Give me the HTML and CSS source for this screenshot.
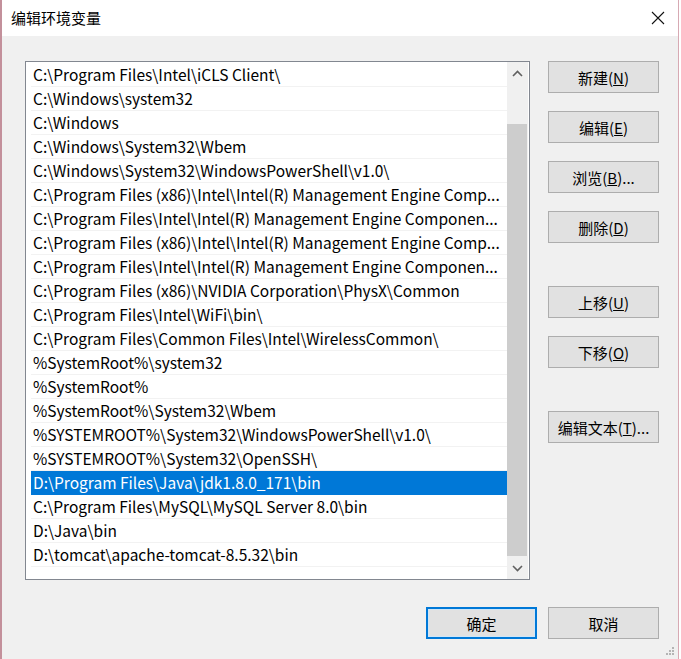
FILE: index.html
```html
<!DOCTYPE html>
<html lang="zh">
<head>
	<meta charset="UTF-8">
	<meta name="viewport" content="width=device-width, initial-scale=1.0">
	<title>编辑环境变量</title>
	<link rel="stylesheet" href="styles.css">
</head>
<body>
    <div id="dialog">
        <div class="titlebar">
            <span class="title">编辑环境变量</span>
            <svg class="close" width="14" height="14" viewBox="0 0 14 14"><path d="M1 1L13 13M13 1L1 13" stroke="#111" stroke-width="1.1" fill="none"/></svg>
        </div>

        <div class="content">
            <div class="main">
                <div class="listbox">
                    <ul class="rows">
                        <li>C:\Program Files\Intel\iCLS Client\</li>
                        <li>C:\Windows\system32</li>
                        <li>C:\Windows</li>
                        <li>C:\Windows\System32\Wbem</li>
                        <li>C:\Windows\System32\WindowsPowerShell\v1.0\</li>
                        <li>C:\Program Files (x86)\Intel\Intel(R) Management Engine Comp...</li>
                        <li>C:\Program Files\Intel\Intel(R) Management Engine Componen...</li>
                        <li>C:\Program Files (x86)\Intel\Intel(R) Management Engine Comp...</li>
                        <li>C:\Program Files\Intel\Intel(R) Management Engine Componen...</li>
                        <li>C:\Program Files (x86)\NVIDIA Corporation\PhysX\Common</li>
                        <li>C:\Program Files\Intel\WiFi\bin\</li>
                        <li>C:\Program Files\Common Files\Intel\WirelessCommon\</li>
                        <li>%SystemRoot%\system32</li>
                        <li>%SystemRoot%</li>
                        <li>%SystemRoot%\System32\Wbem</li>
                        <li>%SYSTEMROOT%\System32\WindowsPowerShell\v1.0\</li>
                        <li>%SYSTEMROOT%\System32\OpenSSH\</li>
                        <li class="active">D:\Program Files\Java\jdk1.8.0_171\bin</li>
                        <li>C:\Program Files\MySQL\MySQL Server 8.0\bin</li>
                        <li>D:\Java\bin</li>
                        <li>D:\tomcat\apache-tomcat-8.5.32\bin</li>
                    </ul>
                    <div class="scrollbar">
                        <div class="arrow up"><svg width="11" height="7" viewBox="0 0 11 7"><path d="M1 6L5.5 1.5L10 6" stroke="#606060" stroke-width="1.6" fill="none"/></svg></div>
                        <div class="track"><div class="thumb"></div></div>
                        <div class="arrow down"><svg width="11" height="7" viewBox="0 0 11 7"><path d="M1 1L5.5 5.5L10 1" stroke="#606060" stroke-width="1.6" fill="none"/></svg></div>
                    </div>
                </div>

                <div class="side">
                    <button>新建(<u>N</u>)</button>
                    <button>编辑(<u>E</u>)</button>
                    <button>浏览(<u>B</u>)...</button>
                    <button>删除(<u>D</u>)</button>
                    <button class="group">上移(<u>U</u>)</button>
                    <button>下移(<u>O</u>)</button>
                    <button class="group">编辑文本(<u>T</u>)...</button>
                </div>
            </div>

            <div class="footer">
                <button class="default">确定</button>
                <button>取消</button>
            </div>
        </div>

        <svg class="grip" width="12" height="12" viewBox="0 0 12 12" fill="#b4b4b4">
            <rect x="9" y="1" width="2" height="2"/>
            <rect x="6" y="4" width="2" height="2"/><rect x="9" y="4" width="2" height="2"/>
            <rect x="3" y="7" width="2" height="2"/><rect x="6" y="7" width="2" height="2"/><rect x="9" y="7" width="2" height="2"/>
        </svg>
    </div>
</body>
</html>
```

FILE: styles.css
```css
*{
	padding: 0;
	margin: 0;
	box-sizing: border-box;
}
body {
	background: #fff;
	font-family: "Noto Sans CJK SC", "Noto Sans", sans-serif;
	font-size: 15px;
	color: #000;
}

#dialog {
    position: relative;
    width: 679px;
    height: 659px;
    display: flex;
    flex-direction: column;
    border-left: 2px solid #c3909b;
    border-right: 1px solid #d7a9b3;
}

.titlebar {
    height: 36px;
    background: #fff;
    display: flex;
    align-items: center;
    justify-content: space-between;
    padding: 0 13px 0 9px;
}
.title {
    line-height: 36px;
}

.content {
    flex: 1;
    background: #f0f0f0;
    padding: 25px 19px 0 23px;
}
.main {
    display: flex;
}

.listbox {
    width: 505px;
    height: 519px;
    border: 1px solid #828790;
    background: #fff;
    display: flex;
}
ul.rows {
    list-style: none;
    flex: 1;
    padding: 1px 0 0 5px;
    overflow: hidden;
}
ul.rows li {
    height: 24px;
    line-height: 23px;
    padding-left: 2px;
    font-size: 15.5px;
    border-bottom: 1px solid #f2f2f2;
    white-space: nowrap;
    overflow: hidden;
}
ul.rows li.active {
    background: #0078d7;
    color: #fff;
    border-bottom-color: #0078d7;
}

.scrollbar {
    width: 22px;
    padding-right: 1px;
    display: flex;
    flex-direction: column;
    background: #f0f0f0;
    border-right: 1px solid #fff;
}
.arrow {
    height: 22px;
    display: flex;
    align-items: center;
    justify-content: center;
}
.track {
    flex: 1;
    padding-top: 40px;
    padding-bottom: 1px;
}
.thumb {
    height: 100%;
    background: #cdcdcd;
}

.side {
    margin-left: 18px;
    display: flex;
    flex-direction: column;
    gap: 18px;
}
.side .group {
    margin-top: 25px;
}

button {
    width: 111px;
    height: 32px;
    background: #e1e1e1;
    border: 1px solid #adadad;
    font-family: "Noto Sans CJK SC", "Noto Sans", sans-serif;
    font-size: 15px;
    color: #000;
}
button.default {
    border: 2px solid #0078d7;
    box-shadow: inset 0 0 0 1px #cfe6f8;
}

.footer {
    margin-top: 27px;
    display: flex;
    justify-content: flex-end;
    gap: 11px;
}

.grip {
    position: absolute;
    right: 3px;
    bottom: 1px;
}
```
